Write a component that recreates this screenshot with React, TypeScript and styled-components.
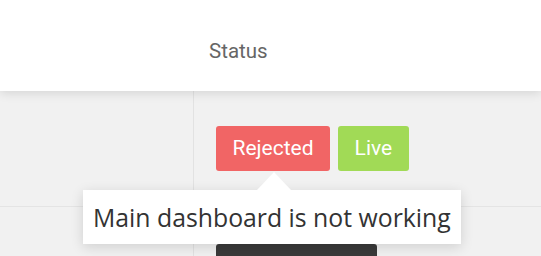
import React from "react";
import styled, { createGlobalStyle } from "styled-components";

const GlobalStyle = createGlobalStyle`
  html, body {
    margin: 0;
    padding: 0;
    background: #f1f1f1;
    overflow: hidden;
  }
  body {
    font-family: Roboto, "Liberation Sans", sans-serif;
  }
`;

const Table = styled.div`
  width: 541px;
  height: 256px;
  position: relative;
  overflow: hidden;
  background: #f1f1f1;
`;

const Header = styled.div`
  display: grid;
  grid-template-columns: 193px 1fr;
  height: 91px;
  background: #fff;
  box-shadow: 0 2px 10px rgba(0, 0, 0, 0.12);
  position: relative;
  z-index: 1;
`;

const HeaderCell = styled.div`
  display: flex;
  align-items: center;
  padding: 10px 0 0 16px;
  font-size: 20.5px;
  color: #666;
`;

const Row = styled.div<{ $height: number }>`
  display: grid;
  grid-template-columns: 193px 1fr;
  height: ${(p) => p.$height}px;
  border-bottom: 1px solid #e4e4e4;
`;

const Cell = styled.div<{ $padTop: number }>`
  border-left: 1px solid #e2e2e2;
  display: flex;
  align-items: flex-start;
  gap: 8px;
  padding: ${(p) => p.$padTop}px 0 0 22px;
`;

const Badge = styled.span<{ $bg: string }>`
  position: relative;
  display: inline-flex;
  align-items: center;
  height: 45px;
  padding: 0 16.5px;
  border-radius: 3px;
  background: ${(p) => p.$bg};
  color: #fff;
  font-size: 21px;
  line-height: 1;
`;

const Tooltip = styled.div`
  position: absolute;
  top: 64px;
  left: -133px;
  padding: 0 10px;
  height: 54px;
  display: flex;
  align-items: center;
  white-space: nowrap;
  background: #fff;
  color: #333;
  font-family: "Open Sans", "Noto Sans", sans-serif;
  font-size: 24.8px;
  box-shadow: 0 3px 12px rgba(0, 0, 0, 0.14);
  z-index: 5;

  &::before {
    content: "";
    position: absolute;
    top: -18px;
    left: 174px;
    border-left: 17px solid transparent;
    border-right: 17px solid transparent;
    border-bottom: 18px solid #fff;
  }
`;

export default function App() {
  return (
    <>
      <GlobalStyle />
      <Table>
        <Header>
          <div />
          <HeaderCell>Status</HeaderCell>
        </Header>
        <Row $height={115}>
          <div />
          <Cell $padTop={35}>
            <Badge $bg="#f16565">
              Rejected
              <Tooltip>Main dashboard is not working</Tooltip>
            </Badge>
            <Badge $bg="#a1da56">Live</Badge>
          </Cell>
        </Row>
        <Row $height={115}>
          <div />
          <Cell $padTop={37}>
            <Badge $bg="#3a3a3a">Enhancement</Badge>
          </Cell>
        </Row>
      </Table>
    </>
  );
}
